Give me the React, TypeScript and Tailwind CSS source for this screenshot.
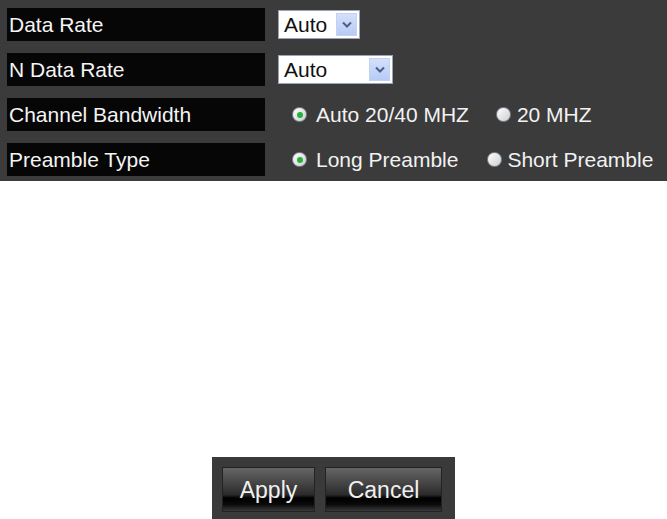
import React from "react";

const font = { fontFamily: '"Liberation Sans", Arial, sans-serif' };

function Label({ children }: { children: React.ReactNode }) {
  return (
    <div className="w-[258px] h-[33px] bg-[#060606] flex items-center pl-[2px] text-[21px] text-[#f4f4f4] leading-none">
      {children}
    </div>
  );
}

function Select({ width }: { width: number }) {
  return (
    <div
      className="h-[29px] bg-white border border-[#9aa6b8] flex items-center justify-between pl-[5px] pr-[2px] text-[21px] text-[#111] leading-none"
      style={{ width }}
    >
      <span>Auto</span>
      <div className="w-[21px] h-[23px] bg-gradient-to-b from-[#d4e0fb] to-[#b7cbf5] border border-[#c3d2f2] flex items-center justify-center">
        <svg width="10" height="7" viewBox="0 0 10 7">
          <path d="M1 1.5 L5 5.5 L9 1.5" fill="none" stroke="#4a5f8c" strokeWidth="2" />
        </svg>
      </div>
    </div>
  );
}

function Circle({ checked }: { checked?: boolean }) {
  return (
    <div className="w-[15px] h-[15px] shrink-0 rounded-full bg-gradient-to-br from-white to-[#cfcfcf] border border-[#7d8896] flex items-center justify-center">
      {checked && <div className="w-[6px] h-[6px] rounded-full bg-[#23b23a]" />}
    </div>
  );
}

export default function App() {
  const txt = "text-[21px] text-[#f2f2f2] leading-none";
  return (
    <div className="w-[667px] h-[519px] bg-white flex flex-col overflow-hidden" style={font}>
      <div className="w-full h-[181px] bg-[#3b3b3b] pt-[8px] pl-[7px] flex flex-col gap-[12px]">
        <div className="flex items-center">
          <Label>Data Rate</Label>
          <div className="ml-[13px]">
            <Select width={82} />
          </div>
        </div>
        <div className="flex items-center">
          <Label>N Data Rate</Label>
          <div className="ml-[13px]">
            <Select width={115} />
          </div>
        </div>
        <div className="flex items-center">
          <Label>Channel Bandwidth</Label>
          <div className="ml-[27px] flex items-center">
            <Circle checked />
            <span className={`ml-[9px] ${txt}`}>Auto 20/40 MHZ</span>
            <div className="ml-[27px]">
              <Circle />
            </div>
            <span className={`ml-[6px] ${txt}`}>20 MHZ</span>
          </div>
        </div>
        <div className="flex items-center">
          <Label>Preamble Type</Label>
          <div className="ml-[27px] flex items-center">
            <Circle checked />
            <span className={`ml-[9px] ${txt}`}>Long Preamble</span>
            <div className="ml-[29px]">
              <Circle />
            </div>
            <span className={`ml-[5px] ${txt}`}>Short Preamble</span>
          </div>
        </div>
      </div>
      <div className="flex-1" />
      <div className="flex justify-center">
        <div className="w-[243px] h-[62px] bg-[#3a3a3a] pt-[10px] pl-[10px] flex gap-[10px]">
          {[
            { label: "Apply", w: "w-[93px]" },
            { label: "Cancel", w: "w-[117px]" },
          ].map((b) => (
            <div
              key={b.label}
              className={`${b.w} h-[45px] flex items-center justify-center pt-[2px] text-[23px] text-[#f0f0f0] leading-none border border-[#222]`}
              style={{
                background:
                  "linear-gradient(to bottom, #656565 0%, #4a4a4a 30%, #2a2a2a 62%, #000 70%, #0a0a0a 85%, #3a3a3a 100%)",
              }}
            >
              {b.label}
            </div>
          ))}
        </div>
      </div>
    </div>
  );
}
